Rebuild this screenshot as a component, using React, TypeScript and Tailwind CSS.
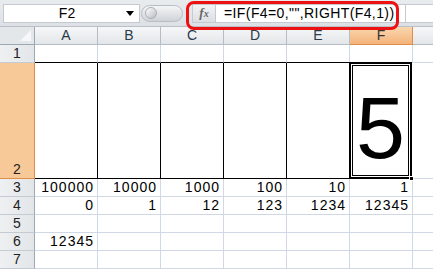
import React from "react";

const cols = ["A", "B", "C", "D", "E", "F"];

const row3 = ["100000", "10000", "1000", "100", "10", "1"];
const row4 = ["0", "1", "12", "123", "1234", "12345"];

function RowHead({ n, h, active }: { n: number; h: string; active?: boolean }) {
  return (
    <div
      className={`w-[35px] shrink-0 ${h} flex items-end justify-center border-r border-b ${
        active
          ? "bg-[#f7c898] border-r-[#e08d48] border-b-[#e08d48]"
          : "bg-gradient-to-r from-[#eef0f2] to-[#e3e6e9] border-r-[#9ea8b3] border-b-[#c5cbd2]"
      } text-[14px] leading-[17px] text-[#222]`}
    >
      {n}
    </div>
  );
}

function Cell({ v }: { v?: string }) {
  return (
    <div className="w-[63px] shrink-0 h-full border-r border-b border-[#d0d7e5] flex items-end justify-end pr-[3px] text-[14px] leading-[17px] tracking-[1px] text-black">
      {v}
    </div>
  );
}

function PlainRow({ n, vals }: { n: number; vals?: string[] }) {
  return (
    <div className="flex h-[18px]">
      <RowHead n={n} h="h-[18px]" />
      {cols.map((c, i) => (
        <Cell key={c} v={vals ? vals[i] : undefined} />
      ))}
      <div className="flex-1 border-b border-[#d0d7e5]" />
    </div>
  );
}

export default function App() {
  return (
    <div
      className="w-[433px] h-[269px] overflow-hidden bg-white select-none"
      style={{ fontFamily: '"Liberation Sans", Arial, sans-serif' }}
    >
      {/* formula bar */}
      <div className="relative h-[27px] bg-gradient-to-b from-[#e9ecef] to-[#dde1e6] border-b border-[#b9c0c8] flex items-center pl-[3px]">
        <div className="w-[137px] h-[19px] bg-white border border-[#c5cad0] flex items-center">
          <span className="flex-1 text-center text-[14px] pl-[4px]">F2</span>
          <span className="mr-[5px] w-0 h-0 border-l-[4px] border-r-[4px] border-t-[5px] border-l-transparent border-r-transparent border-t-black" />
        </div>
        <div className="ml-[1px] w-[42px] h-[17px] rounded-full bg-gradient-to-b from-[#f4f5f6] to-[#cfd3d8] border border-[#b8bec5] flex items-center pl-[3px]">
          <div className="w-[12px] h-[12px] rounded-full bg-gradient-to-br from-[#ffffff] to-[#b8bdc3] border border-[#a9afb6]" />
        </div>
        <div className="ml-[9px] w-[24px] h-[19px] bg-gradient-to-b from-[#f2f3f5] to-[#dcdfe3] border border-[#c5cad0] flex items-center justify-center">
          <span
            className="text-[13px] italic font-bold text-[#666]"
            style={{ fontFamily: '"Liberation Serif", serif' }}
          >
            f<span className="text-[10px]">x</span>
          </span>
        </div>
        <div className="w-[190px] h-[19px] bg-white border border-l-0 border-[#c5cad0] flex items-center pl-[8px] text-[14px] text-black tracking-[0.4px]">
          =IF(F4=0,"",RIGHT(F4,1))
        </div>
        <div className="flex-1 h-[19px] bg-white border-y border-[#c5cad0]" />
        <div className="absolute left-[186px] top-[1px] w-[213px] h-[29px] rounded-[8px] border-[3px] border-[#ee1111]" />
      </div>

      {/* column headers */}
      <div className="flex h-[18px]">
        <div className="w-[35px] shrink-0 h-full bg-[#e4e7ea] border-r border-b border-[#9ea8b3] flex items-end justify-end p-[3px]">
          <div className="w-0 h-0 border-l-[11px] border-l-transparent border-b-[11px] border-b-[#f6f7f8]" />
        </div>
        {cols.map((c) => (
          <div
            key={c}
            className={`w-[63px] shrink-0 h-full border-r border-b flex items-center justify-center text-[14px] ${
              c === "F"
                ? "bg-gradient-to-b from-[#f9d7ae] to-[#f4b37a] border-[#e08d48] text-[#333]"
                : "bg-gradient-to-b from-[#f6f7f8] to-[#e3e6e9] border-[#b4bcc5] text-[#2a3a4a]"
            }`}
          >
            {c}
          </div>
        ))}
        <div className="flex-1 h-full bg-gradient-to-b from-[#f6f7f8] to-[#e3e6e9] border-b border-[#b4bcc5]" />
      </div>

      {/* row 1 */}
      <div className="flex h-[18px]">
        <RowHead n={1} h="h-[18px]" />
        {cols.map((c) => (
          <div
            key={c}
            className={`w-[63px] shrink-0 h-full border-r border-[#d0d7e5] ${
              c === "F" ? "border-b border-b-[#d0d7e5]" : "border-b border-b-black"
            }`}
          />
        ))}
        <div className="flex-1 border-b border-[#d0d7e5]" />
      </div>

      {/* row 2 */}
      <div className="flex h-[116px]">
        <RowHead n={2} h="h-[116px]" active />
        {cols.slice(0, 5).map((c) => (
          <div key={c} className="w-[63px] shrink-0 h-full border-r border-b border-black" />
        ))}
        <div className="relative w-[63px] shrink-0 -mt-px h-[117px] border-2 border-black p-px -ml-px">
          <div className="h-full border border-black flex items-end justify-center pb-[3px] text-[88px] leading-[88px] text-black">
            5
          </div>
          <div className="absolute -right-[4px] -bottom-[4px] w-[5px] h-[5px] bg-black border border-white" />
        </div>
        <div className="flex-1 border-b border-[#d0d7e5]" />
      </div>

      <PlainRow n={3} vals={row3} />
      <PlainRow n={4} vals={row4} />
      <PlainRow n={5} />
      <PlainRow n={6} vals={["12345"]} />
      <PlainRow n={7} />
    </div>
  );
}
